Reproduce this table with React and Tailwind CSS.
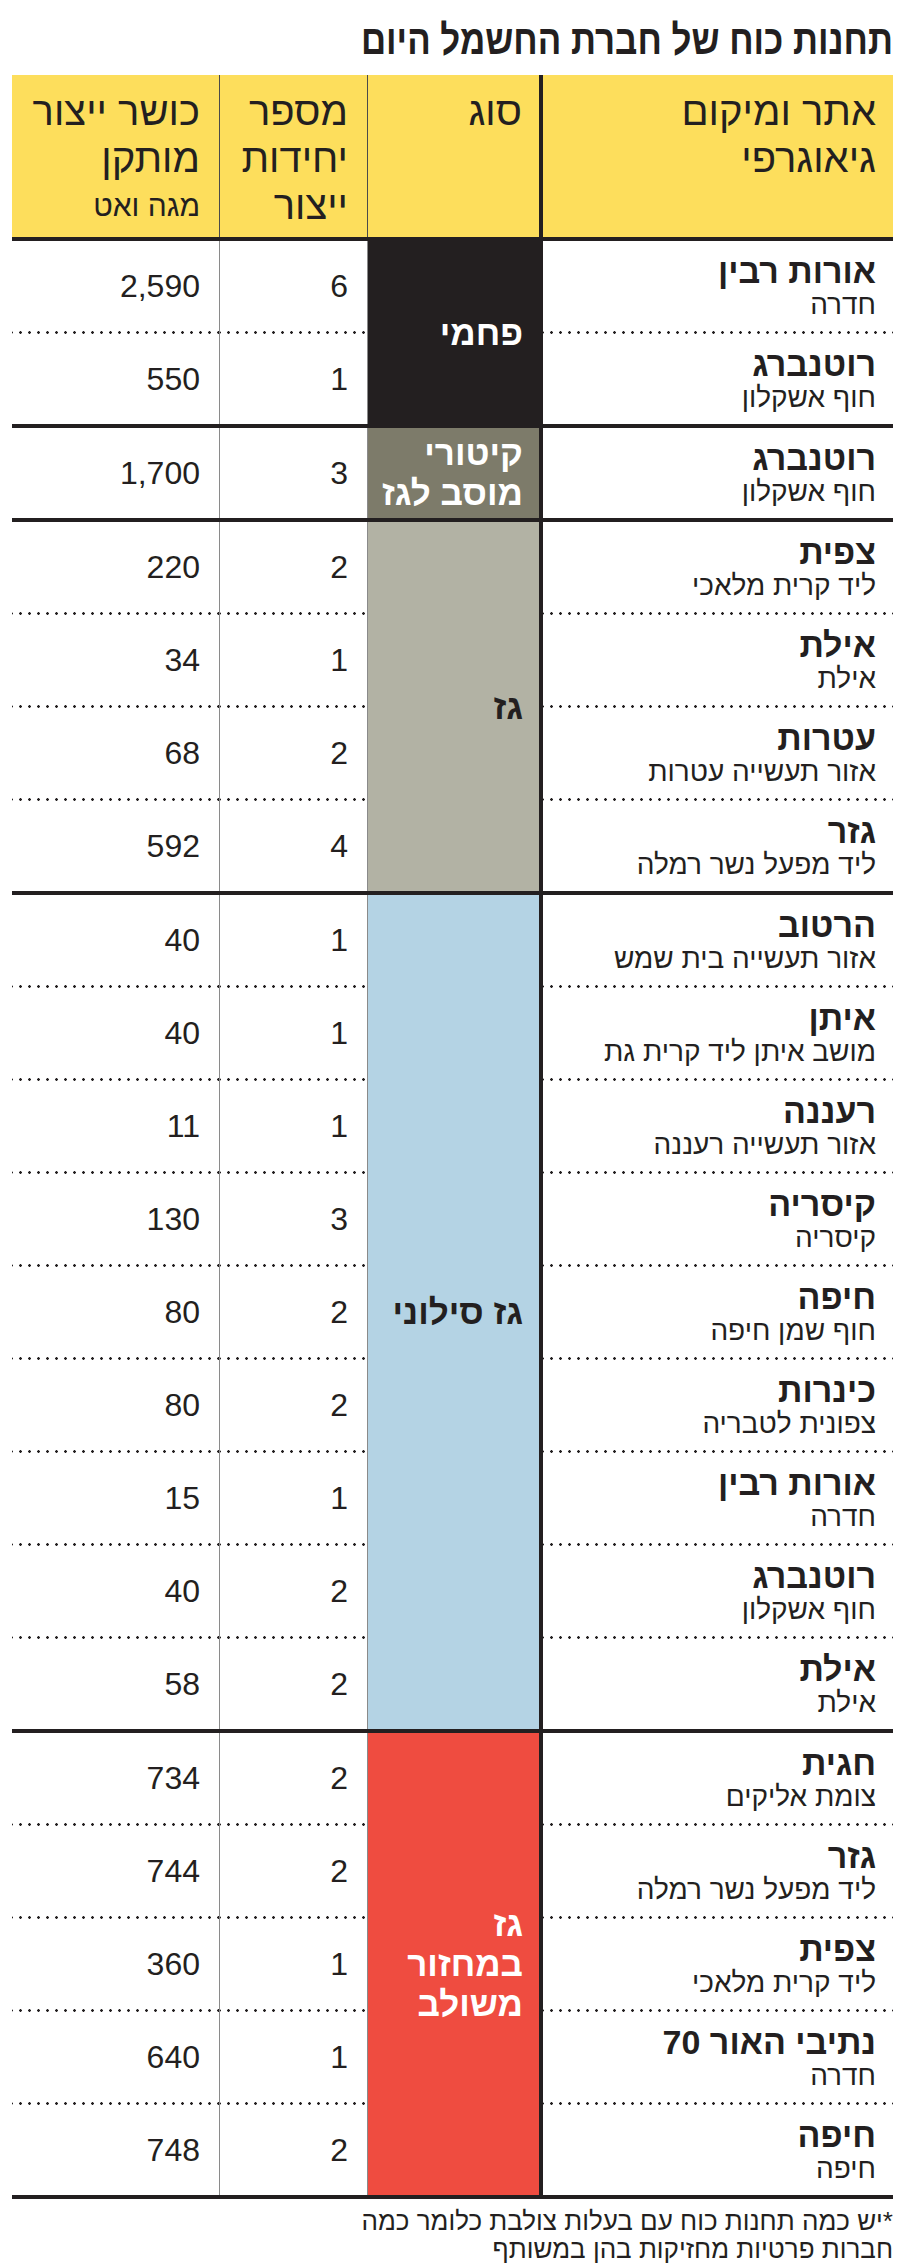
import React from "react";

const FONT = { fontFamily: '"Liberation Sans", Arial, sans-serif' };

const groups = [
  {
    type: ["פחמי"],
    bg: "bg-[#231f20]",
    color: "text-white",
    rows: [
      ["אורות רבין", "חדרה", "6", "2,590"],
      ["רוטנברג", "חוף אשקלון", "1", "550"],
    ],
  },
  {
    type: ["קיטורי", "מוסב לגז"],
    bg: "bg-[#7d7b6a]",
    color: "text-white",
    rows: [["רוטנברג", "חוף אשקלון", "3", "1,700"]],
  },
  {
    type: ["גז"],
    bg: "bg-[#b2b2a4]",
    color: "text-[#231f20]",
    rows: [
      ["צפית", "ליד קרית מלאכי", "2", "220"],
      ["אילת", "אילת", "1", "34"],
      ["עטרות", "אזור תעשייה עטרות", "2", "68"],
      ["גזר", "ליד מפעל נשר רמלה", "4", "592"],
    ],
  },
  {
    type: ["גז סילוני"],
    bg: "bg-[#b4d3e4]",
    color: "text-[#231f20]",
    rows: [
      ["הרטוב", "אזור תעשייה בית שמש", "1", "40"],
      ["איתן", "מושב איתן ליד קרית גת", "1", "40"],
      ["רעננה", "אזור תעשייה רעננה", "1", "11"],
      ["קיסריה", "קיסריה", "3", "130"],
      ["חיפה", "חוף שמן חיפה", "2", "80"],
      ["כינרות", "צפונית לטבריה", "2", "80"],
      ["אורות רבין", "חדרה", "1", "15"],
      ["רוטנברג", "חוף אשקלון", "2", "40"],
      ["אילת", "אילת", "2", "58"],
    ],
  },
  {
    type: ["גז", "במחזור", "משולב"],
    bg: "bg-[#ef4c40]",
    color: "text-white",
    rows: [
      ["חגית", "צומת אליקים", "2", "734"],
      ["גזר", "ליד מפעל נשר רמלה", "2", "744"],
      ["צפית", "ליד קרית מלאכי", "1", "360"],
      ["נתיבי האור 70", "חדרה", "1", "640"],
      ["חיפה", "חיפה", "2", "748"],
    ],
  },
];

function Dots() {
  return (
    <div className="h-[3px] w-full bg-[radial-gradient(circle,#231f20_1px,transparent_1.6px)] bg-[length:9px_3px] bg-repeat-x bg-[position:4px_0]" />
  );
}

function Column({ cells, className }) {
  return (
    <div className={"flex flex-col " + className}>
      {cells.map((c, i) => (
        <React.Fragment key={i}>
          {i > 0 && <Dots />}
          {c}
        </React.Fragment>
      ))}
    </div>
  );
}

function Group({ g }) {
  const siteCells = g.rows.map((r, i) => (
    <div key={i} className="h-[90px] flex flex-col justify-center pr-[17px] text-[#231f20]">
      <div className="text-[34px] leading-[36px] font-bold">{r[0]}</div>
      <div className="text-[28px] leading-[31px] font-normal">{r[1]}</div>
    </div>
  ));
  const unitCells = g.rows.map((r, i) => (
    <div key={i} className="h-[90px] flex items-center pr-[19px] text-[32px] text-[#231f20]">
      {r[2]}
    </div>
  ));
  const capCells = g.rows.map((r, i) => (
    <div key={i} className="h-[90px] flex items-center pr-[19px] text-[32px] text-[#231f20]">
      {r[3]}
    </div>
  ));
  return (
    <div className="flex">
      <Column cells={siteCells} className="w-[354px] border-l-4 border-[#231f20]" />
      <div
        className={
          "w-[172px] flex flex-col justify-center pr-[16px] font-bold text-[35px] leading-[40px] border-l border-[#8a8a8a] whitespace-nowrap " +
          g.bg +
          " " +
          g.color
        }
      >
        {g.type.map((t, i) => (
          <div key={i}>{t}</div>
        ))}
      </div>
      <Column cells={unitCells} className="w-[148px] border-l border-[#8a8a8a]" />
      <Column cells={capCells} className="w-[207px]" />
    </div>
  );
}

export default function App() {
  return (
    <div dir="rtl" style={FONT} className="w-[906px] h-[2263px] bg-white text-[#231f20] overflow-hidden">
      <div className="h-[75px] pr-[13px] pt-[18px]">
        <div className="inline-block origin-right scale-x-[0.83] text-[42px] leading-[44px] font-bold whitespace-nowrap">
          תחנות כוח של חברת החשמל היום
        </div>
      </div>
      <div className="w-[881px] mr-[13px]">
        <div className="flex bg-[#fdde5c] h-[162px] text-[40px] leading-[47px]">
          <div className="w-[354px] border-l-4 border-[#231f20] pr-[17px] pt-[13px]">
            <div>אתר ומיקום</div>
            <div>גיאוגרפי</div>
          </div>
          <div className="w-[172px] border-l border-[#4a4a4a] pr-[17px] pt-[13px]">
            <div>סוג</div>
          </div>
          <div className="w-[148px] border-l border-[#4a4a4a] pr-[19px] pt-[13px]">
            <div>מספר</div>
            <div>יחידות</div>
            <div>ייצור</div>
          </div>
          <div className="w-[207px] pr-[19px] pt-[13px]">
            <div>כושר ייצור</div>
            <div>מותקן</div>
            <div className="text-[30px] leading-[47px]">מגה ואט</div>
          </div>
        </div>
        <div className="h-[4px] bg-[#231f20]" />
        {groups.map((g, i) => (
          <React.Fragment key={i}>
            <Group g={g} />
            <div className="h-[4px] bg-[#231f20]" />
          </React.Fragment>
        ))}
        <div className="pt-[8px] text-[26px] leading-[28px] text-[#231f20]">
          <div>*יש כמה תחנות כוח עם בעלות צולבת כלומר כמה</div>
          <div>חברות פרטיות מחזיקות בהן במשותף</div>
        </div>
      </div>
    </div>
  );
}
